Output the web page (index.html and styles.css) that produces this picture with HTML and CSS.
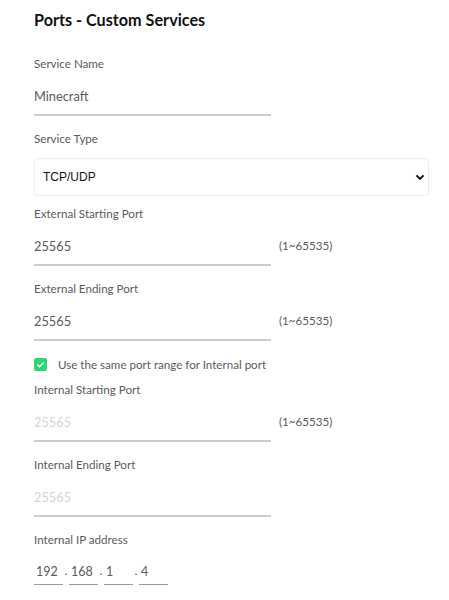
FILE: index.html
```html
<!DOCTYPE html>
<html>
<head>
<meta charset="utf-8">
<link rel="stylesheet" href="styles.css">
</head>
<body>
<div class="page">
  <h1 class="title">Ports - Custom Services</h1>

  <div class="field">
    <div class="label">Service Name</div>
    <div class="row"><div class="input">Minecraft</div></div>
  </div>

  <div class="field field-select">
    <div class="label">Service Type</div>
    <div class="select">
      <span class="select-text">TCP/UDP</span>
      <svg class="chevron" width="10" height="7" viewBox="0 0 10 7"><path d="M1.5 1.4 L5 4.9 L8.5 1.4" fill="none" stroke="#111" stroke-width="2"/></svg>
    </div>
  </div>

  <div class="field">
    <div class="label">External Starting Port</div>
    <div class="row"><div class="input">25565</div><span class="hint">(1~65535)</span></div>
  </div>

  <div class="field">
    <div class="label">External Ending Port</div>
    <div class="row"><div class="input">25565</div><span class="hint">(1~65535)</span></div>
  </div>

  <div class="check-row">
    <span class="checkbox"><svg width="13" height="13" viewBox="0 0 13 13"><path d="M3.3 6.6 L5.5 8.7 L9.7 4.4" fill="none" stroke="#fff" stroke-width="1.4"/></svg></span>
    <span class="check-label">Use the same port range for Internal port</span>
  </div>

  <div class="field">
    <div class="label">Internal Starting Port</div>
    <div class="row"><div class="input disabled">25565</div><span class="hint">(1~65535)</span></div>
  </div>

  <div class="field">
    <div class="label">Internal Ending Port</div>
    <div class="row"><div class="input disabled">25565</div></div>
  </div>

  <div class="field">
    <div class="label">Internal IP address</div>
    <div class="ip">
      <div class="ip-seg">192</div><span class="dot">.</span>
      <div class="ip-seg">168</div><span class="dot">.</span>
      <div class="ip-seg">1</div><span class="dot">.</span>
      <div class="ip-seg">4</div>
    </div>
  </div>
</div>
</body>
</html>
```

FILE: styles.css
```css
html, body {
  margin: 0;
  padding: 0;
  background: #fff;
}
body {
  font-family: Lato, "Noto Sans", sans-serif;
  color: #5a5a5a;
}
.page {
  padding: 9px 0 0 34px;
}
.title {
  margin: 0 0 23px 0;
  font-size: 16.2px;
  line-height: 22px;
  font-weight: 700;
  color: #111;
}
.field {
  margin-bottom: 13px;
}
.label {
  font-size: 11.6px;
  line-height: 20px;
  color: #5a5a5a;
}
.row {
  display: flex;
  align-items: flex-start;
}
.input {
  width: 237px;
  box-sizing: border-box;
  padding: 12px 0 8px 0;
  line-height: 20px;
  height: 42px;
  font-size: 12.8px;
  color: #5a5a5a;
  border-bottom: 2px solid #ccc;
}
.input.disabled {
  color: #d6d6d6;
}
.hint {
  margin-left: 8px;
  padding-top: 12px;
  line-height: 20px;
  font-size: 11.6px;
  color: #5a5a5a;
}
.field-select {
  margin-bottom: 8px;
}
.field-select .label {
  margin-bottom: 9px;
}
.select {
  width: 395px;
  height: 38px;
  box-sizing: border-box;
  border: 1px solid #eee;
  border-radius: 3px;
  display: flex;
  align-items: center;
  justify-content: space-between;
  padding: 0 3px 0 8px;
}
.select-text {
  font-family: "Liberation Sans", Arial, sans-serif;
  font-size: 12px;
  color: #111;
}
.chevron {
  display: block;
}
.check-row {
  display: flex;
  align-items: center;
  height: 20px;
  margin-bottom: 6px;
}
.checkbox {
  width: 13px;
  height: 13px;
  border-radius: 2px;
  background: #2ed573;
  display: block;
}
.checkbox svg {
  display: block;
}
.check-label {
  margin-left: 11px;
  font-size: 11.6px;
  color: #5a5a5a;
}
.ip {
  display: flex;
  align-items: flex-start;
}
.ip-seg {
  width: 29px;
  box-sizing: border-box;
  padding: 12px 0 0 2px;
  line-height: 20px;
  height: 35px;
  font-size: 12.5px;
  color: #5a5a5a;
  border-bottom: 1px solid #999;
}
.dot {
  width: 6px;
  text-align: center;
  padding-top: 11px;
  line-height: 20px;
  font-size: 12px;
  color: #5a5a5a;
}
```
